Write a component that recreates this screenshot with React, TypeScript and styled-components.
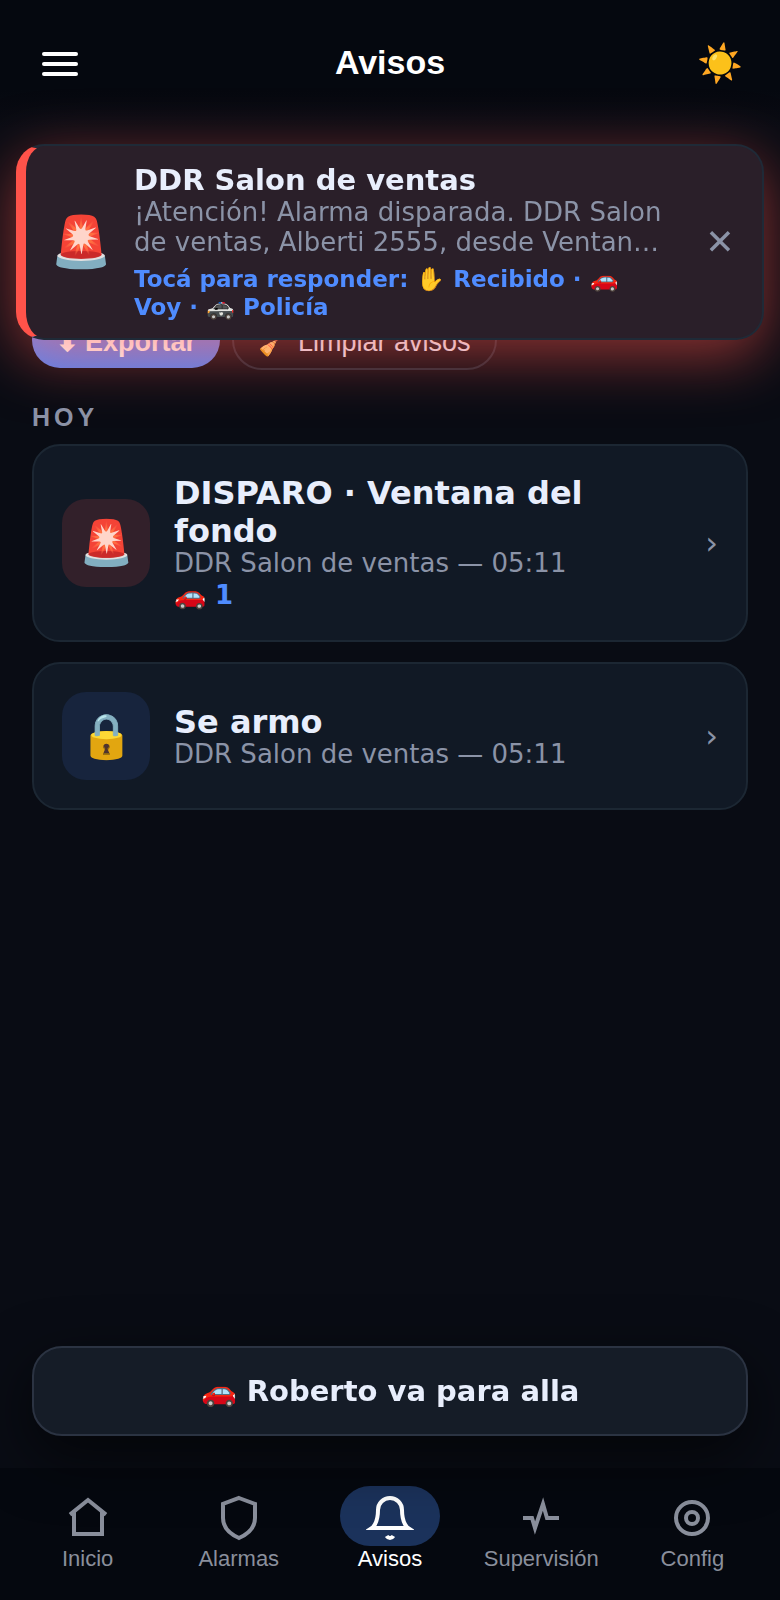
import React, { useState } from "react";
import styled, { createGlobalStyle, css } from "styled-components";

const GlobalStyle = createGlobalStyle`
  * {
    box-sizing: border-box;
  }
  body {
    margin: 0;
    background: #090c14;
    color: #e8eefc;
    font-family: "DejaVu Sans", sans-serif;
  }
  button {
    font: inherit;
    color: inherit;
    border: 0;
    padding: 0;
    background: none;
    cursor: pointer;
  }
`;

const PageUI = styled.div`
  min-height: 100vh;
  display: flex;
  flex-direction: column;
`;

const HeaderUI = styled.header`
  height: 128px;
  padding: 0 36px;
  display: grid;
  grid-template-columns: 48px 1fr 48px;
  align-items: center;
  background: linear-gradient(180deg, #05080f 70%, #090c14);
  h1 {
    margin: 0;
    padding-bottom: 4px;
    text-align: center;
    font: bold 34px/40px "Liberation Sans", sans-serif;
    color: #ffffff;
  }
`;

const MenuButton = styled.button`
  height: 48px;
  display: flex;
  flex-direction: column;
  align-items: center;
  justify-content: center;
  gap: 6px;
  span {
    width: 36px;
    height: 4px;
    border-radius: 2px;
    background: #ffffff;
  }
`;

const ThemeButton = styled.button`
  display: flex;
  justify-content: center;
  font-size: 37px;
  line-height: 48px;
`;

const MainUI = styled.main`
  flex: 1;
  padding: 182px 32px 32px;
  display: flex;
  flex-direction: column;
`;

const ActionsUI = styled.div`
  display: flex;
  align-items: center;
  gap: 12px;
`;

const ActionButton = styled.button<{ $primary?: boolean }>`
  display: flex;
  align-items: center;
  gap: 6px;
  padding: 4px 24px 0;
  border-radius: 32px;
  font: 27px/30px "Liberation Sans", sans-serif;
  ${({ $primary }) =>
    $primary
      ? css`
          height: 56px;
          font-weight: bold;
          color: #ffffff;
          background: linear-gradient(180deg, #7a8cf0, #5686f4);
        `
      : css`
          height: 60px;
          border: 2px solid #222b38;
          color: #e8eefc;
        `}
`;

const DayTitle = styled.h2`
  margin: 32px 0 12px;
  font: bold 25px/30px "Liberation Sans", sans-serif;
  letter-spacing: 4px;
  color: #8b93a7;
`;

const ListUI = styled.div`
  display: flex;
  flex-direction: column;
  gap: 20px;
`;

const EventCard = styled.button`
  width: 100%;
  padding: 28px;
  display: flex;
  align-items: center;
  gap: 24px;
  text-align: left;
  background: #111925;
  border: 2px solid #1c2733;
  border-radius: 28px;
`;

const EventIcon = styled.span<{ $alert?: boolean }>`
  flex: none;
  width: 88px;
  height: 88px;
  display: flex;
  align-items: center;
  justify-content: center;
  border-radius: 24px;
  font-size: 44px;
  line-height: 52px;
  background: ${({ $alert }) => ($alert ? "#32202a" : "#17243d")};
`;

const EventText = styled.span`
  flex: 1;
  min-width: 0;
  padding-bottom: 3px;
  display: flex;
  flex-direction: column;
  .title {
    font-size: 32px;
    line-height: 38px;
    font-weight: bold;
  }
  .sub {
    font-size: 26px;
    line-height: 26px;
    color: #8b93a7;
  }
  .replies {
    margin-top: 5px;
    font-size: 26px;
    line-height: 28px;
    font-weight: bold;
    color: #4f8cff;
  }
`;

const Chevron = styled.span`
  font-size: 32px;
  line-height: 38px;
  color: #8b93a7;
`;

const AlertUI = styled.section`
  position: fixed;
  top: 144px;
  left: 16px;
  right: 16px;
  padding: 17px 8px 17px 24px;
  display: flex;
  align-items: center;
  gap: 22px;
  background: #2a1f29;
  border: 2px solid #1f2a37;
  border-left: 10px solid #ff534a;
  border-radius: 28px;
  box-shadow: 0 16px 60px rgba(255, 83, 74, 0.55);
`;

const AlertIcon = styled.span`
  font-size: 50px;
  line-height: 60px;
`;

const AlertText = styled.div`
  flex: 1;
  min-width: 0;
  h3 {
    margin: 0;
    font-size: 29px;
    line-height: 34px;
  }
  p {
    margin: 0;
    font-size: 26px;
    line-height: 30px;
    color: #8b93a7;
    display: -webkit-box;
    -webkit-box-orient: vertical;
    -webkit-line-clamp: 2;
    overflow: hidden;
  }
  strong {
    display: block;
    margin-top: 8px;
    font-size: 23px;
    line-height: 28px;
    color: #4f8cff;
  }
`;

const CloseButton = styled.button`
  flex: none;
  width: 68px;
  height: 68px;
  font-size: 35px;
  color: #8b93a7;
`;

const SnackUI = styled.div`
  position: fixed;
  left: 32px;
  right: 32px;
  bottom: 164px;
  padding: 26px 28px;
  text-align: center;
  font-size: 29px;
  line-height: 34px;
  font-weight: bold;
  background: #151c27;
  border: 2px solid #2b3342;
  border-radius: 30px;
  box-shadow: 0 20px 60px rgba(0, 0, 0, 0.6);
`;

const NavUI = styled.nav`
  height: 132px;
  padding: 18px 12px 0;
  display: grid;
  grid-template-columns: repeat(5, 1fr);
  background: #05080f;
`;

const NavItem = styled.a<{ $active?: boolean }>`
  display: flex;
  flex-direction: column;
  align-items: center;
  text-decoration: none;
  font: 22px/26px "Liberation Sans", sans-serif;
  color: ${({ $active }) => ($active ? "#ffffff" : "#8a8f9c")};
  .icon {
    width: 100px;
    height: 60px;
    padding-top: 8px;
    display: flex;
    justify-content: center;
    border-radius: 30px;
    background: ${({ $active }) => ($active ? "#1b325b" : "none")};
  }
  svg {
    width: 48px;
    height: 48px;
    fill: none;
    stroke: currentColor;
    stroke-width: 2;
  }
`;

const navItems = [
  {
    label: "Inicio",
    icon: <path d="M3 10.3L12 3l9 7.3M5 9v11h14V9" />,
  },
  {
    label: "Alarmas",
    icon: <path d="M12 2l8 3v7c0 5-3.5 8-8 10-4.5-2-8-5-8-10V5z" />,
  },
  {
    label: "Avisos",
    icon: (
      <>
        <path d="M18 8a6 6 0 0 0-12 0c0 7-3 9-3 9h18s-3-2-3-9" />
        <path d="M13.7 21a2 2 0 0 1-3.4 0" />
      </>
    ),
  },
  {
    label: "Supervisión",
    icon: <path strokeMiterlimit="10" d="M3 12h4.5l1.5 5 4-12 2 7h6" />,
  },
  {
    label: "Config",
    icon: (
      <>
        <circle cx="12" cy="12" r="8" />
        <circle cx="12" cy="12" r="3" />
      </>
    ),
  },
];

const events = [
  {
    icon: "🚨",
    alert: true,
    title: "DISPARO · Ventana del fondo",
    sub: "DDR Salon de ventas — 05:11",
    replies: "🚗 1",
  },
  {
    icon: "🔒",
    title: "Se armo",
    sub: "DDR Salon de ventas — 05:11",
  },
];

const AlarmAlert = ({ onClose }: { onClose: () => void }) => (
  <AlertUI role="alert">
    <AlertIcon>🚨</AlertIcon>
    <AlertText>
      <h3>DDR Salon de ventas</h3>
      <p>
        ¡Atención! Alarma disparada. DDR Salon de ventas, Alberti 2555, desde
        Ventana del fondo
      </p>
      <strong>Tocá para responder: ✋ Recibido · 🚗 Voy · 🚓 Policía</strong>
    </AlertText>
    <CloseButton aria-label="Cerrar" onClick={onClose}>
      ✕
    </CloseButton>
  </AlertUI>
);

const App: React.FC = () => {
  const [alertOpen, setAlertOpen] = useState(true);
  const [active, setActive] = useState("Avisos");

  return (
    <PageUI>
      <GlobalStyle />
      <HeaderUI>
        <MenuButton aria-label="Menú">
          <span />
          <span />
          <span />
        </MenuButton>
        <h1>Avisos</h1>
        <ThemeButton aria-label="Cambiar tema">☀️</ThemeButton>
      </HeaderUI>
      <MainUI>
        <ActionsUI>
          <ActionButton $primary>
            <span>⬇</span>
            <span>Exportar</span>
          </ActionButton>
          <ActionButton>
            <span>🧹</span>
            <span>Limpiar avisos</span>
          </ActionButton>
        </ActionsUI>
        <DayTitle>HOY</DayTitle>
        <ListUI>
          {events.map((item) => (
            <EventCard key={item.title}>
              <EventIcon $alert={item.alert}>{item.icon}</EventIcon>
              <EventText>
                <span className="title">{item.title}</span>
                <span className="sub">{item.sub}</span>
                {item.replies && (
                  <span className="replies">{item.replies}</span>
                )}
              </EventText>
              <Chevron>›</Chevron>
            </EventCard>
          ))}
        </ListUI>
      </MainUI>
      <NavUI>
        {navItems.map((item) => (
          <NavItem
            key={item.label}
            href="#"
            $active={item.label === active}
            onClick={() => setActive(item.label)}
          >
            <span className="icon">
              <svg viewBox="0 0 24 24" aria-hidden="true">
                {item.icon}
              </svg>
            </span>
            {item.label}
          </NavItem>
        ))}
      </NavUI>
      <SnackUI role="status">🚗 Roberto va para alla</SnackUI>
      {alertOpen && <AlarmAlert onClose={() => setAlertOpen(false)} />}
    </PageUI>
  );
};

export default App;
